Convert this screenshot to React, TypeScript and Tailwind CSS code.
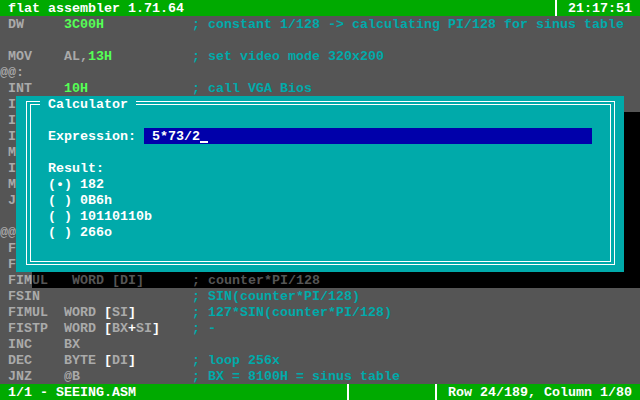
type Seg = [string, string];

const G = "text-[#aaaaaa]";
const N = "text-[#55ff55]";
const C = "text-[#00aaaa]";
const W = "text-white";

const ins = (name: string): Seg => [" " + name.padEnd(7), G];

function CodeLine({ segs, comment }: { segs: Seg[]; comment?: string }) {
  const len = segs.reduce((a, s) => a + s[0].length, 0);
  return (
    <div className="h-4 whitespace-pre">
      {segs.map(([t, c], i) => (
        <span key={i} className={c}>
          {t}
        </span>
      ))}
      {comment && <span className={C}>{" ".repeat(Math.max(0, 24 - len)) + comment}</span>}
    </div>
  );
}

function Bar() {
  return (
    <span className="flex w-2 h-4 pl-[3px]">
      <span className="w-[2px] h-4 bg-white" />
    </span>
  );
}

function Cursor() {
  return (
    <span className="flex w-2 h-4 pt-[13px]">
      <span className="w-2 h-[2px] bg-white" />
    </span>
  );
}

const hidden = [" I", " I", " I", " M", " I", " M", " J", "", "@@", " F", " F"];

const shadowText = (() => {
  const full = " FIMUL   WORD [DI]";
  return full.slice(4) + " ".repeat(24 - full.length) + "; counter*PI/128";
})();

export default function App() {
  return (
    <div className="relative w-[640px] h-[400px] overflow-hidden bg-[#555555] font-['Liberation_Mono',monospace] text-[13.333px] leading-[18px] font-bold">
      <div className="flex flex-col">
        <div className="flex h-4 bg-[#00aa00] text-white whitespace-pre">
          <span className="w-[552px]"> flat assembler 1.71.64</span>
          <Bar />
          <span> 21:17:51</span>
        </div>

        <CodeLine segs={[ins("DW"), ["3C00H", N]]} comment="; constant 1/128 -> calculating PI/128 for sinus table" />
        <div className="h-4" />
        <CodeLine segs={[ins("MOV"), ["AL,", G], ["13H", N]]} comment="; set video mode 320x200" />
        <CodeLine segs={[["@@:", G]]} />
        <CodeLine segs={[ins("INT"), ["10H", N]]} comment="; call VGA Bios" />
        {hidden.map((t, i) => (
          <CodeLine key={i} segs={[[t, G]]} />
        ))}

        <div className="flex h-4 whitespace-pre">
          <span className={G}> FIM</span>
          <span className="flex-1 bg-black text-[#555555]">{shadowText}</span>
        </div>

        <CodeLine segs={[ins("FSIN")]} comment="; SIN(counter*PI/128)" />
        <CodeLine segs={[ins("FIMUL"), ["WORD ", G], ["[", W], ["SI", G], ["]", W]]} comment="; 127*SIN(counter*PI/128)" />
        <CodeLine
          segs={[ins("FISTP"), ["WORD ", G], ["[", W], ["BX", G], ["+", W], ["SI", G], ["]", W]]}
          comment="; -"
        />
        <CodeLine segs={[ins("INC"), ["BX", G]]} />
        <CodeLine segs={[ins("DEC"), ["BYTE ", G], ["[", W], ["DI", G], ["]", W]]} comment="; loop 256x" />
        <CodeLine segs={[ins("JNZ"), ["@B", G]]} comment="; BX = 8100H = sinus table" />

        <div className="flex h-4 bg-[#00aa00] text-white whitespace-pre">
          <span className="w-[344px]"> 1/1 - SEEING.ASM</span>
          <Bar />
          <span className="w-20" />
          <Bar />
          <span> Row 24/189, Column 1/80</span>
        </div>
      </div>

      {/* calculator dialog */}
      <div className="absolute left-4 top-24 w-[608px] h-[176px] bg-[#00aaaa] text-white">
        <div className="absolute left-[10px] top-[5px] w-[589px] h-[164px] border border-white" />
        <div className="absolute left-[14px] top-[8px] w-[581px] h-[158px] border border-white" />
        <div className="relative flex flex-col whitespace-pre">
          <div className="h-4 pl-6">
            <span className="bg-[#00aaaa]"> Calculator </span>
          </div>
          <div className="h-4" />
          <div className="flex h-4">
            <span className="w-32 pl-8">Expression:</span>
            <span className="flex w-[448px] bg-[#0000aa]">
              <span> 5*73/2</span>
              <Cursor />
            </span>
          </div>
          <div className="h-4" />
          <div className="h-4 pl-8">Result:</div>
          <div className="h-4 pl-8">(•) 182</div>
          <div className="h-4 pl-8">( ) 0B6h</div>
          <div className="h-4 pl-8">( ) 10110110b</div>
          <div className="h-4 pl-8">( ) 266o</div>
        </div>
      </div>
      <div className="absolute left-[624px] top-28 w-4 h-40 bg-black" />
    </div>
  );
}
